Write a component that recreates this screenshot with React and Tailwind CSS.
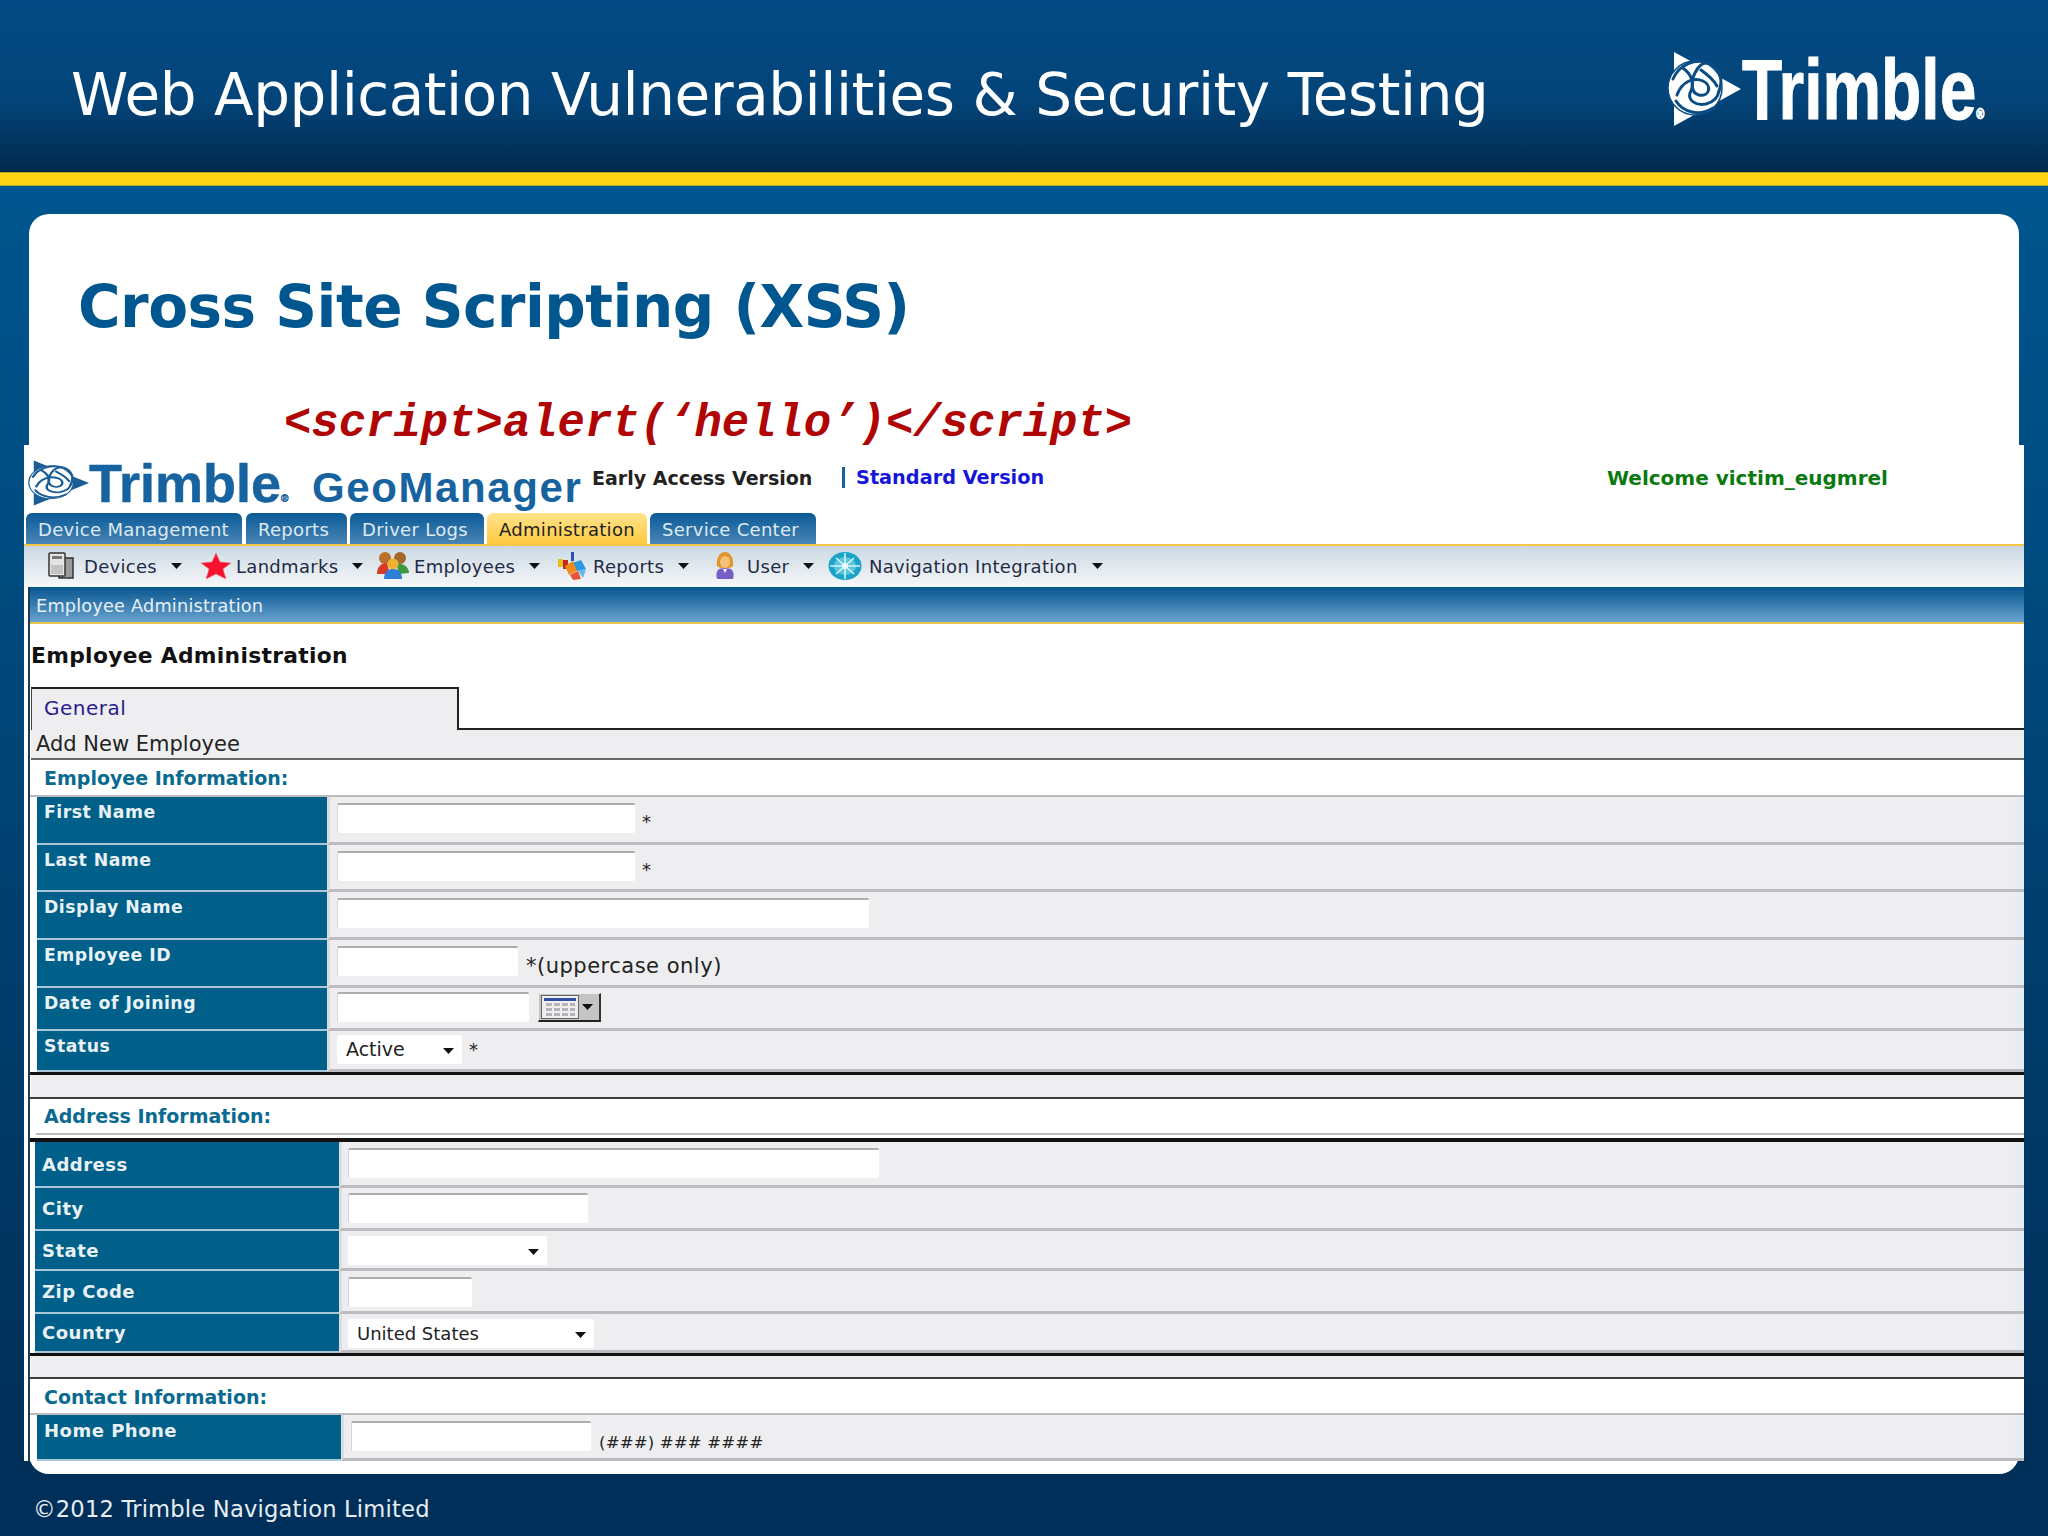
import React from 'react';

const Caret = ({ className = '' }) => (
  <svg width="11" height="6" viewBox="0 0 11 6" className={className}><path d="M0 0h11L5.5 6z" fill="#111" /></svg>
);

const TrimbleMark = ({ fill, tri, line, className = '' }) => (
  <svg viewBox="0 0 74 76" preserveAspectRatio="none" className={className}>
    <path d="M7 1L74 38L7 75Z" fill={tri} />
    <circle cx="28" cy="37" r="27" fill={fill} stroke={line} strokeWidth="1.5" />
    <g fill="none" stroke={line} strokeWidth="3" strokeLinecap="round">
      <path d="M6 28C12 14 28 6 44 13C54 19 56 30 52 40" />
      <path d="M10 44C15 30 27 26 36 30C45 34 43 46 32 44C23 42 23 28 31 17C34 13 39 11 44 13" />
      <path d="M16 17C25 24 28 33 23 42C21 49 28 55 39 53C47 51 51 46 52 40" />
      <path d="M9 50C16 61 32 66 46 57" />
      <path d="M34 19C41 24 47 29 50 35" />
    </g>
  </svg>
);

const DevicesIcon = () => (
  <svg width="30" height="30" viewBox="0 0 28 30">
    <rect x="12" y="7" width="14" height="20" fill="#9a9a9a" stroke="#333" strokeWidth="1.5" />
    <rect x="2" y="2" width="16" height="23" rx="1" fill="#e4e4e4" stroke="#333" strokeWidth="1.5" />
    <rect x="5" y="5" width="10" height="3" fill="#777" />
    <rect x="4" y="14" width="12" height="9" fill="#c2c2c2" />
  </svg>
);

const StarIcon = () => (
  <svg width="32" height="28" viewBox="0 0 32 28">
    <path d="M16 1L20 10L31 11L23 17L26 27L16 22L6 27L9 17L1 11L12 10Z" fill="#f5112f" stroke="#e77" strokeWidth=".5" />
  </svg>
);

const EmployeesIcon = () => (
  <svg width="34" height="28" viewBox="0 0 34 28">
    <circle cx="9" cy="6" r="6" fill="#b8702a" />
    <circle cx="24" cy="6" r="6" fill="#a5682c" />
    <path d="M1 22C1 13 7 11 11 11L14 22Z" fill="#d93a22" />
    <path d="M21 12C28 11 33 16 33 21L22 22Z" fill="#3d9a3a" />
    <circle cx="17" cy="12" r="5.5" fill="#f0b030" />
    <path d="M8 27C8 19 13 17 17 17C22 17 26 20 26 27Z" fill="#2d7fd8" />
  </svg>
);

const ReportsIcon = () => (
  <svg width="30" height="30" viewBox="0 0 30 30">
    <rect x="1" y="8" width="5" height="8" fill="#e5c020" />
    <rect x="6" y="9" width="5" height="9" fill="#c22a20" />
    <rect x="14" y="1" width="3" height="9" fill="#2a4fb5" />
    <path d="M15 12L24 9L29 18L20 20Z" fill="#2a98df" />
    <path d="M8 15L16 10L20 20L12 24Z" fill="#f08a18" />
    <path d="M13 24L21 20L24 28L16 29Z" fill="#e85438" />
    <path d="M21 20L29 18L26 27Z" fill="#62b8e8" />
  </svg>
);

const UserIcon = () => (
  <svg width="24" height="30" viewBox="0 0 24 30">
    <path d="M4 28C2 20 5 17 12 17C19 17 22 20 20 28Z" fill="#7a5ec8" />
    <path d="M10 18L12 22L14 18Z" fill="#fff" />
    <path d="M4 15C3 6 7 1 12 1C17 1 21 6 20 15C18 18 6 18 4 15Z" fill="#e2952a" />
    <ellipse cx="12" cy="11" rx="5" ry="6" fill="#f3c27a" />
  </svg>
);

const NavIcon = () => (
  <svg width="34" height="30" viewBox="0 0 34 30" className="-ml-[3px]">
    <ellipse cx="17" cy="15" rx="16.5" ry="14" fill="#1ca3c8" />
    <ellipse cx="17" cy="15" rx="11" ry="9" fill="#5cc6de" />
    <path d="M2 15H32M17 2V28M8 7L26 23M26 7L8 23" stroke="#d8f3f8" strokeWidth="1.6" />
    <circle cx="17" cy="15" r="3" fill="#e8fbff" />
  </svg>
);

const CalendarButton = () => (
  <div className="ml-[9px] mt-[1px] flex h-[29px] w-[63px] items-center gap-[3px] border-b-2 border-r-2 border-t border-l border-b-[#222] border-r-[#333] border-t-[#eee] border-l-[#eee] bg-[#c4c4c6] pl-[2px]">
    <svg width="38" height="24" viewBox="0 0 38 24">
      <rect x=".5" y=".5" width="37" height="23" fill="#eee" stroke="#666" />
      <rect x="3" y="3" width="32" height="3" fill="#2f4f9f" />
      <path d="M5 8h6v3H5zM13 8h6v3h-6zM21 8h6v3h-6zM29 8h5v3h-5zM5 13h6v3H5zM13 13h6v3h-6zM21 13h6v3h-6zM29 13h5v3h-5zM5 18h6v3H5zM13 18h6v3h-6zM21 18h6v3h-6zM29 18h5v3h-5z" fill="#b4b4ba" />
    </svg>
    <Caret />
  </div>
);

const inputCls = 'block h-[30px] rounded-[2px] border-t-2 border-l border-t-[#adadb0] border-l-[#d5d5d8] bg-white';

const Field = ({ className }) => <input type="text" aria-label="field" className={`${inputCls} ${className}`} />;

const SelectBox = ({ value, className }) => (
  <div className={`flex h-[29px] items-center justify-between rounded-[2px] bg-white pl-[9px] pr-[8px] text-[#222] ${className}`}>
    <span>{value}</span>
    <Caret className="mt-[2px]" />
  </div>
);

// one table row: teal label on the left, grey value cell on the right
const Row = ({ label, height, labelCls, cellCls, children }) => (
  <div className={`flex bg-white ${height}`}>
    <div className={`shrink-0 bg-[#00608a] border-b-2 border-b-[#a9c9d8] font-bold tracking-[.5px] text-[#e9f1f5] ${labelCls}`}>
      {label}
    </div>
    <div className={`flex flex-1 bg-[linear-gradient(90deg,#eeeef0_calc(100%-9px),#e6edf2_calc(100%-9px))] border-l-[3px] border-l-[#dcdcdf] border-b-[3px] border-b-[#bcbcc0] ${cellCls}`}>
      {children}
    </div>
  </div>
);

const SectionTitle = ({ children, className = '' }) => (
  <div className={`bg-white pl-[14px] font-bold text-[19px] text-[#0a6a90] ${className}`}>{children}</div>
);

const tabs = [
  { label: 'Device Management', cls: 'w-[216px] mr-[4px]' },
  { label: 'Reports', cls: 'w-[101px] mr-[3px]' },
  { label: 'Driver Logs', cls: 'w-[134px] mr-[3px]' },
  { label: 'Administration', cls: 'w-[160px] mr-[3px]', active: true },
  { label: 'Service Center', cls: 'w-[166px]' },
];

const tools = [
  { label: 'Devices', Icon: DevicesIcon, cls: 'w-[154px]', iconCls: 'w-[38px]' },
  { label: 'Landmarks', Icon: StarIcon, cls: 'w-[176px]', iconCls: 'w-[36px]' },
  { label: 'Employees', Icon: EmployeesIcon, cls: 'w-[181px]', iconCls: 'w-[38px]' },
  { label: 'Reports', Icon: ReportsIcon, cls: 'w-[156px]', iconCls: 'w-[36px]' },
  { label: 'User', Icon: UserIcon, cls: 'w-[118px]', iconCls: 'w-[34px]' },
  { label: 'Navigation Integration', Icon: NavIcon, cls: 'w-[280px]', iconCls: 'w-[38px]' },
];

const topLabel = 'w-[290px] pl-[7px] pt-[3px] text-[17.3px]';
const midLabel = 'w-[304px] flex items-center pl-[7px] text-[18px]';

const App = () => {
  return (
    <div className="flex h-[1536px] w-[2048px] flex-col overflow-hidden bg-[linear-gradient(#00568f_12%,#003059_92%)] font-['DejaVu_Sans',sans-serif]">
      {/* slide header */}
      <div className="flex h-[172px] shrink-0 items-center justify-between bg-[linear-gradient(#024a84_0%,#03457a_55%,#033c6c_72%,#01294b_100%)] pl-[71px] pr-[62px]">
        <h1 className="whitespace-nowrap pt-[18px] text-[58px] tracking-[-.46px] text-white">Web Application Vulnerabilities &amp; Security Testing</h1>
        <div className="flex items-center pt-[6px]">
          <TrimbleMark fill="#ffffff" tri="#ffffff" line="#0a4d85" className="mr-[1px] h-[76px] w-[74px]" />
          <div className="w-[244px] origin-left scale-x-[.775] whitespace-nowrap font-['Liberation_Sans',sans-serif] text-[85px] font-bold leading-none text-white [-webkit-text-stroke:1px_white]">Trimble<span className="text-[14px] text-[#cfd8e0]">®</span></div>
        </div>
      </div>
      <div className="h-[14px] shrink-0 border-y border-y-[#b8a82a] bg-[#ffd413]" />

      <div className="px-[29px] pt-[28px]">
        {/* white slide card */}
        <div className="h-[1260px] rounded-[20px] bg-white">
          <h2 className="pl-[49px] pt-[61px] text-[58px] font-bold leading-[64px] tracking-[-.5px] text-[#00568f]">Cross Site Scripting (XSS)</h2>
          <div className="pl-[255px] pt-[59px] font-['Liberation_Mono',monospace] text-[45.6px] font-bold italic leading-[52px] text-[#b00505]">{'<script>alert(‘hello’)</script>'}</div>

          {/* pasted GeoManager screenshot */}
          <div className="relative -mx-[5px] mt-[-5px] h-[1016px] bg-white text-[#222]">
            <div className="flex h-[68px] pl-[4px] pt-[15px]">
              <TrimbleMark fill="#ffffff" tri="#1b5e97" line="#1b5e97" className="h-[46px] w-[61px] shrink-0" />
              <div className="mt-[-3px] w-[223px] font-['Liberation_Sans',sans-serif] text-[54px] font-bold leading-[52px] text-[#17639f] [-webkit-text-stroke:.5px_#17639f]">Trimble<span className="text-[10px]">®</span></div>
              <div className="mt-[4px] w-[280px] font-['Liberation_Sans',sans-serif] text-[42px] font-bold leading-[48px] tracking-[1.6px] text-[#17639f]">GeoManager</div>
              <div className="mt-[8px] w-[250px] text-[19px] font-bold leading-[20px] text-[#222]">Early Access Version</div>
              <div className="mr-[11px] mt-[7px] h-[21px] w-[3px] bg-[#17639f]" />
              <div className="mt-[8px] w-[751px] text-[19.3px] font-bold leading-[20px] text-[#1616d8]">Standard Version</div>
              <div className="mt-[8px] whitespace-nowrap text-[20px] font-bold leading-[20px] text-[#0a7a10]">Welcome victim_eugmrel</div>
            </div>

            <div className="flex h-[31px] pl-[2px]">
              {tabs.map((t) => (
                <div key={t.label} className={`flex items-center whitespace-nowrap rounded-t-[6px] pl-[12px] pt-[2px] text-[18px] tracking-[.3px] ${t.cls} ${t.active ? 'bg-[linear-gradient(#ffe38c,#ffc93f)] text-[#222]' : 'bg-[linear-gradient(#0a5a96,#4a85b6)] text-[#dfeaf2]'}`}>{t.label}</div>
              ))}
            </div>
            <div className="h-[2px] bg-[#f5c545]" />

            <div className="flex h-[41px] items-center bg-[linear-gradient(#cbd9e3,#f6f7f9)] pb-[1px] pl-[22px] text-[18px] text-[#1f2a44]">
              {tools.map(({ label, Icon, cls, iconCls }) => (
                <div key={label} className={`flex items-center ${cls}`}>
                  <div className={`flex shrink-0 items-center ${iconCls}`}><Icon /></div>
                  <span className="mr-[14px] whitespace-nowrap tracking-[.3px]">{label}</span>
                  <Caret />
                </div>
              ))}
            </div>

            <div className="ml-[4px] border-l-2 border-l-[#1d3a55]">
              <div className="flex h-[35px] items-center bg-[linear-gradient(#06558f,#69a3cf)] pl-[6px] pt-[4px] text-[17.7px] tracking-[.2px] text-[#e8f0f6]">Employee Administration</div>
              <div className="h-[2px] bg-[#e8c352]" />
              <div className="flex h-[63px] items-center pl-px pt-[1px] text-[21.8px] font-bold tracking-[.3px] text-[#111]">Employee Administration</div>

              <div className="flex h-[43px]">
                <div className="ml-px flex w-[428px] items-center border-l border-r-2 border-t-2 border-l-[#444] border-r-[#222] border-t-[#222] bg-[#eeeef0] pl-[12px] pb-[3px] text-[20px] tracking-[.5px] text-[#2a1b90]">General</div>
                <div className="flex-1 border-b-2 border-b-[#222]" />
              </div>
              <div className="ml-px flex h-[28px] items-center bg-[#eeeef0] pl-[5px] pt-[1px] text-[21px] text-[#222]">Add New Employee</div>
              <div className="ml-px h-[2px] bg-[#666]" />

              <SectionTitle className="flex h-[35px] items-center pt-[2px]">Employee Information:</SectionTitle>
              <div className="h-[2px] bg-[#bcbcc0]" />
              <div className="pl-[7px]">
                <Row label="First Name" height="h-[48px]" labelCls={topLabel} cellCls="items-start pl-[7px] pt-[6px]">
                  <Field className="w-[298px]" /><span className="ml-[7px] mt-[5px] text-[18px]">*</span>
                </Row>
                <Row label="Last Name" height="h-[47px]" labelCls={topLabel} cellCls="items-start pl-[7px] pt-[6px]">
                  <Field className="w-[298px]" /><span className="ml-[7px] mt-[5px] text-[18px]">*</span>
                </Row>
                <Row label="Display Name" height="h-[48px]" labelCls={topLabel} cellCls="items-start pl-[7px] pt-[6px]">
                  <Field className="w-[532px]" />
                </Row>
                <Row label="Employee ID" height="h-[48px]" labelCls={topLabel} cellCls="items-start pl-[7px] pt-[6px]">
                  <Field className="w-[181px]" /><span className="ml-[8px] mt-[5px] text-[21px] tracking-[.5px]">*(uppercase only)</span>
                </Row>
                <Row label="Date of Joining" height="h-[43px]" labelCls={topLabel} cellCls="items-start pl-[7px] pt-[4px]">
                  <Field className="w-[192px]" /><CalendarButton />
                </Row>
                <Row label="Status" height="h-[41px]" labelCls={topLabel} cellCls="items-start pl-[7px] pt-[4px] text-[19px]">
                  <SelectBox value="Active" className="w-[125px]" /><span className="ml-[7px] mt-[1px] text-[18px]">*</span>
                </Row>
              </div>
              <div className="h-[3px] bg-[#111]" />
              <div className="ml-px h-[22px] bg-[#eeeef0]" />
              <div className="h-[2px] bg-[#3c3c40]" />

              <SectionTitle className="flex h-[34px] items-center">Address Information:</SectionTitle>
              <div className="ml-[6px] h-[2px] bg-[#bcbcc0]" />
              <div className="h-[3px] bg-white" />
              <div className="h-[4px] bg-[#111]" />
              <div className="pl-[5px]">
                <Row label="Address" height="h-[46px]" labelCls={midLabel} cellCls="items-start pl-[6px] pt-[6px]">
                  <Field className="w-[531px]" />
                </Row>
                <Row label="City" height="h-[43px]" labelCls={midLabel} cellCls="items-start pl-[6px] pt-[5px]">
                  <Field className="w-[240px]" />
                </Row>
                <Row label="State" height="h-[40px]" labelCls={midLabel} cellCls="items-start pl-[6px] pt-[5px]">
                  <SelectBox value="" className="w-[199px]" />
                </Row>
                <Row label="Zip Code" height="h-[43px]" labelCls={midLabel} cellCls="items-start pl-[6px] pt-[6px]">
                  <Field className="w-[124px]" />
                </Row>
                <Row label="Country" height="h-[39px]" labelCls={midLabel} cellCls="items-start pl-[6px] pt-[5px] text-[18px]">
                  <SelectBox value="United States" className="w-[246px]" />
                </Row>
              </div>
              <div className="h-[3px] bg-[#111]" />
              <div className="ml-px h-[21px] bg-[#eeeef0]" />
              <div className="h-[2px] bg-[#3c3c40]" />

              <SectionTitle className="flex h-[34px] items-center pt-[2px]">Contact Information:</SectionTitle>
              <div className="h-[2px] bg-[#bcbcc0]" />
              <div className="pl-[7px]">
                <Row label="Home Phone" height="h-[46px]" labelCls="w-[304px] pl-[7px] pt-[2px] text-[18px]" cellCls="items-start pl-[7px] pt-[6px]">
                  <Field className="w-[240px]" /><span className="ml-[8px] mt-[10px] text-[16.5px] tracking-[.2px]">(###) ### ####</span>
                </Row>
              </div>
            </div>
          </div>
        </div>
      </div>

      <div className="pl-[33px] pt-[19px] text-[22.6px] tracking-[.2px] text-[#e6edf3]">©2012 Trimble Navigation Limited</div>
    </div>
  );
};

export default App;
